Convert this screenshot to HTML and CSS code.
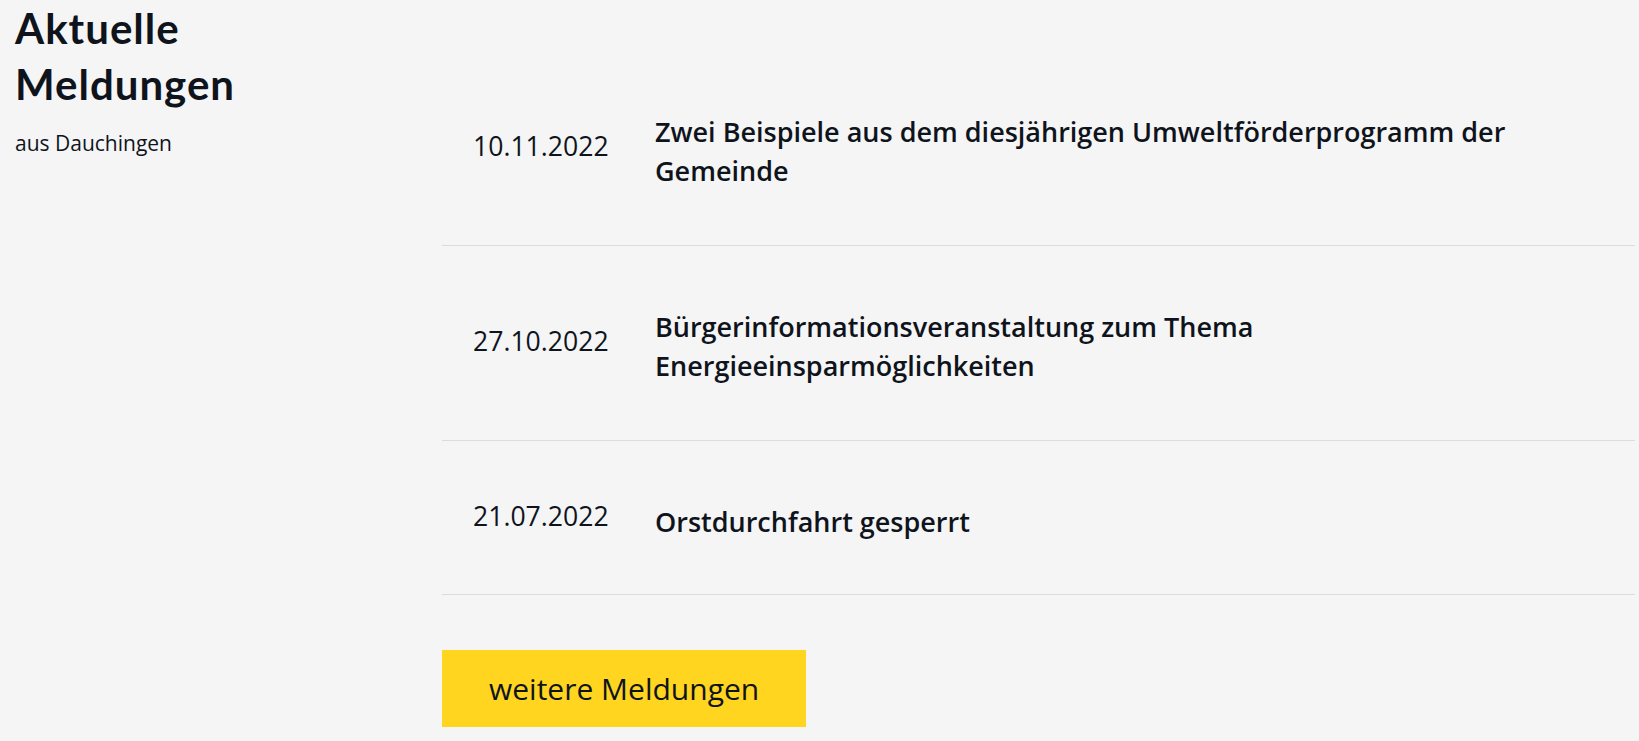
FILE: index.html
```html
<!DOCTYPE html>
<html lang="de">
<head>
    <meta charset="UTF-8">
    <meta name="viewport" content="width=device-width, initial-scale=1.0">
    <title>Aktuelle Meldungen</title>
    <link rel="stylesheet" href="styles.css">
</head>
<body>
    <section class="news">
        <div class="news-intro">
            <h2>Aktuelle Meldungen</h2>
            <p>aus Dauchingen</p>
        </div>
        <div class="news-main">
            <ul class="news-list">
                <li class="news-item">
                    <span class="news-date">10.11.2022</span>
                    <a class="news-title" href="#">Zwei Beispiele aus dem diesjährigen Umweltförderprogramm der Gemeinde</a>
                </li>
                <li class="news-item">
                    <span class="news-date">27.10.2022</span>
                    <a class="news-title" href="#">Bürgerinformationsveranstaltung zum Thema Energieeinsparmöglichkeiten</a>
                </li>
                <li class="news-item">
                    <span class="news-date">21.07.2022</span>
                    <a class="news-title" href="#">Orstdurchfahrt gesperrt</a>
                </li>
            </ul>
            <a class="more-button" href="#">weitere Meldungen</a>
        </div>
    </section>
</body>
</html>
```

FILE: styles.css
```css
/* Reset some default styles */
body, h2, p, ul, li, span, a {
    margin: 0;
    padding: 0;
    box-sizing: border-box;
}

body {
    font-family: "Open Sans", Arial, sans-serif;
    background-color: #f5f5f5;
    color: #0f141c;
}

.news {
    display: flex;
    padding: 0 4px 0 15px;
}

.news-intro {
    width: 427px;
    flex-shrink: 0;
}

.news-intro h2 {
    font-family: "Lato", "DejaVu Sans", sans-serif;
    font-weight: 700;
    font-size: 42px;
    line-height: 56px;
    width: 260px;
    margin-top: 0;
    letter-spacing: 1px;
}

.news-intro p {
    font-size: 21px;
    line-height: 28px;
    margin-top: 17px;
}

.news-main {
    flex: 1;
    padding-top: 51px;
}

.news-list {
    list-style: none;
}

.news-item {
    display: flex;
    align-items: center;
    padding: 61px 0 55px;
    border-bottom: 1px solid #dcdcdc;
}

.news-item:last-child {
    padding-bottom: 53px;
}

.news-date {
    width: 213px;
    flex-shrink: 0;
    padding-left: 31px;
    padding-bottom: 11px;
    font-size: 26.6px;
    line-height: 28px;
}

.news-title {
    color: inherit;
    text-decoration: none;
    font-size: 27px;
    font-weight: 600;
    line-height: 39px;
    max-width: 880px;
}

.more-button {
    display: inline-block;
    margin-top: 55px;
    padding: 19px 47px;
    background-color: #ffd520;
    color: inherit;
    text-decoration: none;
    font-size: 30px;
    line-height: 39px;
}
```
